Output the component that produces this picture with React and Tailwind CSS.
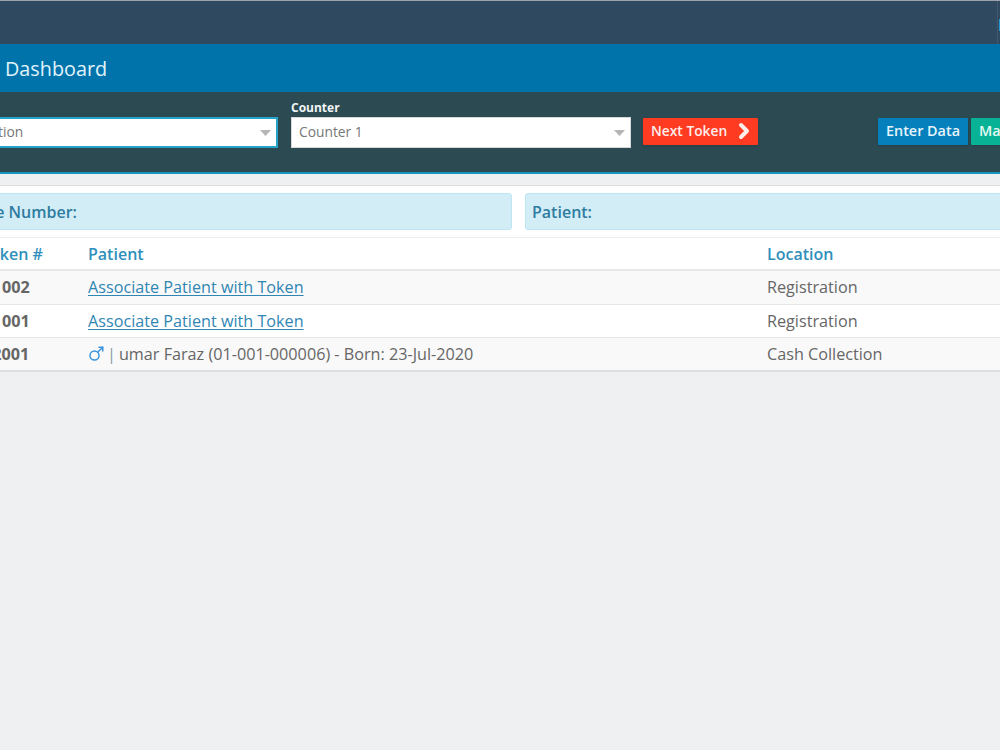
import React from "react";
import { Mars, ChevronRight } from "lucide-react";

function Caret() {
  return (
    <svg width="11" height="6" viewBox="0 0 11 6" className="shrink-0">
      <polygon points="0,0 11,0 5.5,6" fill="#b5b5b5" />
    </svg>
  );
}

function Field({ label, value, focused }) {
  return (
    <div className={focused ? "w-[341px] flex flex-col" : "w-[340px] flex flex-col"}>
      <div className="h-[17px] pt-[1px] text-[12px] leading-[14px] font-bold text-[#f2f5f6]">{label}</div>
      <div
        className={
          "h-[31px] bg-white flex items-center justify-between pl-[7px] pr-[5px] text-[13.8px] text-[#777] " +
          (focused ? "border-2 border-[#27a3c9]" : "border border-[#d8d8d8]")
        }
      >
        <span>{value}</span>
        <Caret />
      </div>
    </div>
  );
}

function Row({ token, alt, last, tokenClass, children, location }) {
  return (
    <div
      className={
        "grid grid-cols-[151px_679px_1fr] items-center h-[33.5px] text-[16.2px] text-[#666] border-b " +
        (alt ? "bg-[#f9f9f9] " : "bg-white ") +
        (last ? "border-[#dcdfe1] border-b-2" : "border-[#e6e6e6]")
      }
    >
      <div className={"font-bold text-[#666] " + tokenClass}>{token}</div>
      <div className="flex items-center">{children}</div>
      <div>{location}</div>
    </div>
  );
}

function AssociateLink() {
  return (
    <a href="#" className="text-[#2f86b3] underline underline-offset-2">
      Associate Patient with Token
    </a>
  );
}

export default function App() {
  return (
    <div className="w-[1000px] h-[750px] overflow-hidden bg-[#eef0f2] font-['Open_Sans',sans-serif]">
      <div className="w-[1300px] -ml-[63px]">
        <div className="h-[1px] bg-[#9aa3ad]" />
        <div className="h-[43px] bg-[#2f4a60] flex">
          <div className="ml-[1060px] w-[1px] bg-[#43586d]" />
          <div className="ml-[1px] mt-[18px] w-[3px] h-[12px] bg-[#1f9bd1]" />
        </div>
        <div className="h-[48px] bg-[#0073ab] flex items-center pl-[68px] pt-[2px] text-[19.8px] text-[#e2f3fb]">
          Dashboard
        </div>
        <div className="h-[82px] bg-[#2c4a52] border-b-2 border-[#1a93bd] pt-[8px] flex items-start">
          <div className="flex gap-[13px]">
            <Field label="Location" value="Registration" focused />
            <Field label="Counter" value="Counter 1" />
          </div>
          <button className="ml-[12px] mt-[18px] w-[115px] h-[27px] pb-[1px] pl-[8px] bg-[#ff3b22] text-[#ffeeea] text-[13.8px] font-semibold flex items-center gap-[5px] shadow-sm rounded-[1px]">
            Next Token
            <ChevronRight size={24} strokeWidth={4} />
          </button>
          <button className="ml-[120px] mt-[18px] w-[90px] h-[27px] pb-[1px] bg-[#0580bd] text-[#e6f5fc] text-[14.4px] font-semibold shadow-sm rounded-[1px]">
            Enter Data
          </button>
          <button className="ml-[3px] mt-[18px] w-[110px] h-[27px] pb-[1px] bg-[#07b394] text-[#e6f9f5] text-[14.4px] font-semibold text-left pl-[8px] shadow-sm rounded-[1px]">
            Manual Entry
          </button>
        </div>
        <div className="mt-[11px] bg-white border-t border-[#dcdcdc]">
          <div className="flex gap-[13px] pl-[9px] pt-[7px] pb-[7px] border-b border-[#ececec]">
            <div className="w-[566px] h-[37px] bg-[#d3edf7] border border-[#bde5f2] rounded-[3px] flex items-center pl-[6px] text-[16px] font-semibold text-[#2e7c9f]">
              Queue Number:
            </div>
            <div className="w-[600px] h-[37px] bg-[#d3edf7] border border-[#bde5f2] rounded-[3px] flex items-center pl-[6px] text-[16px] font-semibold text-[#2e7c9f]">
              Patient:
            </div>
          </div>
          <div className="grid grid-cols-[151px_679px_1fr] items-center h-[33px] text-[16px] font-semibold text-[#2f8fbb] border-b-2 border-[#e8e8e8]">
            <div className="pl-[44px]">Token #</div>
            <div>Patient</div>
            <div>Location</div>
          </div>
          <Row token="R 002" alt tokenClass="pl-[50px]" location="Registration">
            <AssociateLink />
          </Row>
          <Row token="R 001" tokenClass="pl-[50px]" location="Registration">
            <AssociateLink />
          </Row>
          <Row token="C2001" alt last tokenClass="pl-[45px]" location="Cash Collection">
            <Mars size={18} strokeWidth={2} className="text-[#3b94dc] -ml-[1px]" />
            <span className="ml-[2px] text-[#7f9fa8]">|</span>
            <span className="ml-[3px]">umar Faraz (01-001-000006) - Born: 23-Jul-2020</span>
          </Row>
        </div>
      </div>
    </div>
  );
}
